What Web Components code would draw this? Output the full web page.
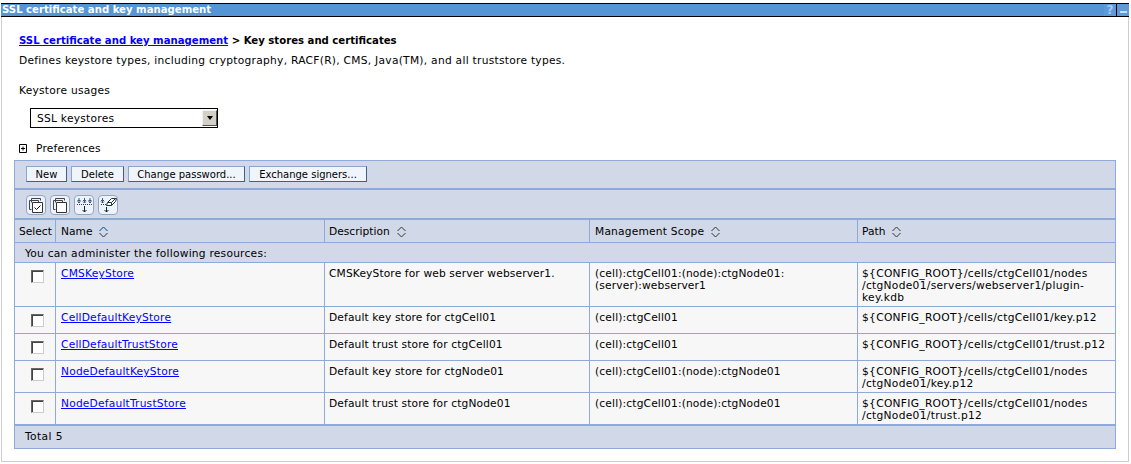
<!DOCTYPE html>
<html>
<head>
<meta charset="utf-8">
<title>SSL certificate and key management</title>
<style>
  html, body { margin: 0; padding: 0; background: #fff; }
  body { font: 10.67px "DejaVu Sans", Verdana, sans-serif; color: #000; width: 1131px; height: 464px; overflow: hidden; }
</style>
</head>
<body>
<portlet-panel heading="SSL certificate and key management">
  <bread-crumb link="SSL certificate and key management" current="Key stores and certificates"></bread-crumb>
  <p-text>Defines keystore types, including cryptography, RACF(R), CMS, Java(TM), and all truststore types.</p-text>
  <usage-select label="Keystore usages" value="SSL keystores"></usage-select>
  <pref-toggle>Preferences</pref-toggle>
  <store-table></store-table>
</portlet-panel>

<script>
class PortletPanel extends HTMLElement {
  constructor() {
    super();
    this.attachShadow({mode: 'open'});
  }
  connectedCallback() {
    this.shadowRoot.innerHTML = `
      <style>
        :host { display: block; margin: 3px 2px 0 1px; height: 459px; box-sizing: border-box; border: 1px solid #ccc; border-top: 0; }
        .bar { display: flex; align-items: stretch; height: 12px; margin: 0 -1px; border-top: 1px solid #000; border-bottom: 1px solid #000; background: #5595d6; color: #fff; font-weight: bold; font-size: 10.13px; line-height: 12px; }
        .bar .t { flex: 1; padding-left: 1px; white-space: nowrap; }
        .btn { width: 12px; display: flex; align-items: center; justify-content: center; background: #5c9ada; color: #a9cdf0; font-size: 12px; }
        .btn + .btn { border-left: 1px solid #000; }
        .min { width: 7px; height: 2px; margin-top: 3px; background: #c4dcf4; }
        .body { padding: 17px 12px 0 12px; }
      </style>
      <div class="bar">
        <div class="t"></div>
        <div class="btn">?</div>
        <div class="btn"><div class="min"></div></div>
      </div>
      <div class="body"><slot></slot></div>`;
    this.shadowRoot.querySelector('.t').textContent = this.getAttribute('heading');
  }
}
customElements.define('portlet-panel', PortletPanel);

class BreadCrumb extends HTMLElement {
  constructor() {
    super();
    this.attachShadow({mode: 'open'});
  }
  connectedCallback() {
    this.shadowRoot.innerHTML = `
      <style>
        :host { display: block; padding-left: 5px; font-weight: bold; font-size: 10.13px; line-height: 13px; white-space: nowrap; }
        a { color: #00f; text-decoration: underline; }
      </style>
      <a href="#">${this.getAttribute('link')}</a> &gt; ${this.getAttribute('current')}`;
  }
}
customElements.define('bread-crumb', BreadCrumb);

class PText extends HTMLElement {
  constructor() {
    super();
    this.attachShadow({mode: 'open'});
    this.shadowRoot.innerHTML = `
      <style>:host { display: block; padding: 7px 0 0 5px; line-height: 13px; white-space: nowrap; letter-spacing: .27px; }</style>
      <slot></slot>`;
  }
}
customElements.define('p-text', PText);

class UsageSelect extends HTMLElement {
  constructor() {
    super();
    this.attachShadow({mode: 'open'});
  }
  connectedCallback() {
    this.shadowRoot.innerHTML = `
      <style>
        :host { display: block; padding: 17px 0 0 5px; line-height: 13px; letter-spacing: .25px; }
        .box { display: flex; align-items: stretch; box-sizing: border-box; width: 188px; height: 20px; margin: 11px 0 0 11px; border: 1px solid #000; background: #fff; }
        .val { flex: 1; padding: 3px 0 0 6px; }
        .arrow { width: 15px; margin: 1px 0; box-sizing: border-box; background: #d4d0c8; border: 1px solid; border-color: #f4f2ee #55534e #55534e #f4f2ee; display: flex; align-items: center; justify-content: center; }
        .arrow i { width: 0; height: 0; border: 3.5px solid transparent; border-top: 4px solid #000; border-bottom: 0; }
      </style>
      <div>${this.getAttribute('label')}</div>
      <div class="box"><div class="val">${this.getAttribute('value')}</div><div class="arrow"><i></i></div></div>`;
  }
}
customElements.define('usage-select', UsageSelect);

class PrefToggle extends HTMLElement {
  constructor() {
    super();
    this.attachShadow({mode: 'open'});
    this.shadowRoot.innerHTML = `
      <style>
        :host { display: flex; align-items: center; gap: 9px; padding: 14px 0 0 5px; line-height: 13px; letter-spacing: .2px; }
        svg { display: block; }
      </style>
      <svg width="8" height="9" viewBox="0 0 8 9"><path d="M.5.5h7v8h-7z" fill="#fff" stroke="#000"/><path d="M2 4.500h4M4 2.500v4" stroke="#000"/></svg>
      <slot></slot>`;
  }
}
customElements.define('pref-toggle', PrefToggle);

class ToolButton extends HTMLElement {
  constructor() {
    super();
    this.attachShadow({mode: 'open'});
    this.shadowRoot.innerHTML = `
      <style>
        :host { display: flex; justify-content: center; box-sizing: border-box; height: 16px; background: #f0f5fc; border: 1px solid; border-color: #8ba5cf #3f5f92 #3f5f92 #8ba5cf; font-size: 10px; line-height: 15px; white-space: nowrap; }
      </style>
      <slot></slot>`;
  }
}
customElements.define('tool-button', ToolButton);

class IconButton extends HTMLElement {
  constructor() {
    super();
    this.attachShadow({mode: 'open'});
  }
  connectedCallback() {
    const icons = {
      selectAll: `<path d="M3.500 1.500h9v2M1.500 3.500h9v2" fill="none" stroke="#444"/><path d="M1.500 3.500v9h2M3.500 1.500v4" fill="none" stroke="#444"/><path d="M4.500 5.500h10v10h-10z" fill="#fff" stroke="#333"/><path d="M6.500 10.500l2 2 4-4" fill="none" stroke="#112"/>`,
      deselect: `<path d="M3.500 1.500h9v2M1.500 3.500h9v2" fill="none" stroke="#444"/><path d="M1.500 3.500v9h2M3.500 1.500v4" fill="none" stroke="#444"/><path d="M4.500 5.500h10v10h-10z" fill="#fff" stroke="#333"/>`,
      expand: `<g fill="none" stroke="#3a5a80"><path d="M3 1v5M1.500 3.500h3M1.500 4.500L3 6l1.500-1.500M8.500 1v5M7 3.500h3M7 4.500L8.500 6l1.500-1.500M14 1v5M12.500 3.500h3M12.500 4.500L14 6l1.500-1.500"/></g><path d="M1 7.500h15" stroke="#335" stroke-dasharray="1 1"/><path d="M8.500 9v6M6.500 13l2 2 2-2" fill="none" stroke="#123"/>`,
      clear: `<g fill="none" stroke="#3a5a80"><path d="M2.500 1v5M1 3.500h3M1 4.500L2.500 6 4 4.500"/></g><path d="M1 7.500h6" stroke="#335" stroke-dasharray="1 1"/><path d="M7.500 5.500l4-4h5l-1 3-4 4h-5z" fill="#fff" stroke="#234"/><path d="M7.500 5.500h4l4-4M11.500 5.500v3" fill="none" stroke="#234"/><path d="M6.500 10v5M4.500 13l2 2 2-2" fill="none" stroke="#123"/>`
    };
    this.shadowRoot.innerHTML = `
      <style>
        :host { display: flex; align-items: center; justify-content: center; box-sizing: border-box; width: 20px; height: 20px; background: #eef2f9; border: 1px solid #8fa6c9; border-radius: 4px; }
        svg { display: block; }
      </style>
      <svg width="17" height="17" viewBox="0 0 17 17">${icons[this.getAttribute('icon')]}</svg>`;
  }
}
customElements.define('icon-button', IconButton);

class SortHead extends HTMLElement {
  constructor() {
    super();
    this.attachShadow({mode: 'open'});
    this.shadowRoot.innerHTML = `
      <style>
        :host { display: flex; align-items: center; gap: 7px; }
        svg { display: block; }
      </style>
      <slot></slot>
      <svg width="9" height="12" viewBox="0 0 9 12" fill="none"><path class="up" d="M.5 5l4-4 4 4" stroke="#333"/><path d="M.5 7l4 4 4-4" stroke="#333"/></svg>`;
  }
  connectedCallback() {
    if (this.hasAttribute('active')) this.shadowRoot.querySelector('.up').setAttribute('stroke', '#00408c');
  }
}
customElements.define('sort-head', SortHead);

class StoreRow extends HTMLElement {
  constructor() {
    super();
    this.attachShadow({mode: 'open'});
  }
  connectedCallback() {
    const d = JSON.parse(this.getAttribute('data'));
    this.shadowRoot.innerHTML = `
      <style>
        :host { display: grid; grid-template-columns: var(--cols); height: ${d.h}px; background: #f7f7f7; border-top: 1px solid #8fa9d8; line-height: 12px; }
        div { padding: 5px 0 0 4px; border-left: 1px solid #8fa9d8; }
        div:first-of-type { border-left: 0; padding: 7px 0 0 16px; }
        .name { padding-left: 5px; letter-spacing: .2px; }
        .desc { letter-spacing: .13px; }
        .scope { padding-left: 5px; letter-spacing: .15px; }
        .path { letter-spacing: .3px; }
        a { color: #00f; text-decoration: underline; }
        i { display: block; box-sizing: border-box; width: 13px; height: 13px; background: #fff; border: 1px solid; border-color: #666 #ccc #ccc #666; box-shadow: inset 1px 1px 0 #444; }
      </style>
      <div><i></i></div>
      <div class="name"><a href="#">${d.name}</a></div>
      <div class="desc">${d.desc}</div>
      <div class="scope">${d.scope}</div>
      <div class="path">${d.path}</div>`;
  }
}
customElements.define('store-row', StoreRow);

const rows = [
  {h: 43, name: 'CMSKeyStore', desc: 'CMSKeyStore for web server webserver1.', scope: '(cell):ctgCell01:(node):ctgNode01:<br>(server):webserver1', path: '${CONFIG_ROOT}/cells/ctgCell01/nodes<br>/ctgNode01/servers/webserver1/plugin-<br>key.kdb'},
  {h: 26, name: 'CellDefaultKeyStore', desc: 'Default key store for ctgCell01', scope: '(cell):ctgCell01', path: '${CONFIG_ROOT}/cells/ctgCell01/key.p12'},
  {h: 26, name: 'CellDefaultTrustStore', desc: 'Default trust store for ctgCell01', scope: '(cell):ctgCell01', path: '${CONFIG_ROOT}/cells/ctgCell01/trust.p12'},
  {h: 31, name: 'NodeDefaultKeyStore', desc: 'Default key store for ctgNode01', scope: '(cell):ctgCell01:(node):ctgNode01', path: '${CONFIG_ROOT}/cells/ctgCell01/nodes<br>/ctgNode01/key.p12'},
  {h: 31, name: 'NodeDefaultTrustStore', desc: 'Default trust store for ctgNode01', scope: '(cell):ctgCell01:(node):ctgNode01', path: '${CONFIG_ROOT}/cells/ctgCell01/nodes<br>/ctgNode01/trust.p12'}
];

class StoreTable extends HTMLElement {
  constructor() {
    super();
    this.attachShadow({mode: 'open'});
  }
  connectedCallback() {
    this.shadowRoot.innerHTML = `
      <style>
        :host { display: block; --cols: 40px 269px 265px 268px 1fr; margin-top: 5px; width: 1102px; box-sizing: border-box; border: 1px solid #8fa9d8; background: #d1d8e8; }
        .tools { display: flex; gap: 4px; box-sizing: border-box; height: 27px; padding: 5px 0 0 11px; }
        .icons { display: flex; gap: 4px; height: 30px; box-sizing: border-box; padding: 5px 0 0 11px; border-top: 2px solid #8fa9d8; }
        .head { display: grid; grid-template-columns: var(--cols); height: 22px; border-top: 2px solid #8fa9d8; line-height: 12px; }
        .head > div { display: flex; align-items: center; padding: 2px 0 0 4px; border-left: 1px solid #8fa9d8; }
        .head > div:first-child { border-left: 0; }
        .head > .n { padding-left: 5px; }
        .head > .s { padding-left: 5px; letter-spacing: .2px; }
        .note { height: 19px; line-height: 21px; padding-left: 10px; border-top: 1px solid #8fa9d8; letter-spacing: .23px; }
        .total { height: 22px; line-height: 22px; padding-left: 10px; border-top: 2px solid #8fa9d8; letter-spacing: .4px; }
      </style>
      <div class="tools">
        <tool-button style="width:41px">New</tool-button>
        <tool-button style="width:53px">Delete</tool-button>
        <tool-button style="width:117px">Change password...</tool-button>
        <tool-button style="width:118px">Exchange signers...</tool-button>
      </div>
      <div class="icons">
        <icon-button icon="selectAll"></icon-button>
        <icon-button icon="deselect"></icon-button>
        <icon-button icon="expand"></icon-button>
        <icon-button icon="clear"></icon-button>
      </div>
      <div class="head">
        <div>Select</div>
        <div class="n"><sort-head active>Name</sort-head></div>
        <div><sort-head>Description</sort-head></div>
        <div class="s"><sort-head>Management Scope</sort-head></div>
        <div><sort-head>Path</sort-head></div>
      </div>
      <div class="note">You can administer the following resources:</div>
      <div class="rows"></div>
      <div class="total">Total 5</div>`;
    const wrap = this.shadowRoot.querySelector('.rows');
    rows.forEach(r => {
      const el = document.createElement('store-row');
      el.setAttribute('data', JSON.stringify(r));
      wrap.appendChild(el);
    });
  }
}
customElements.define('store-table', StoreTable);
</script>
</body>
</html>
